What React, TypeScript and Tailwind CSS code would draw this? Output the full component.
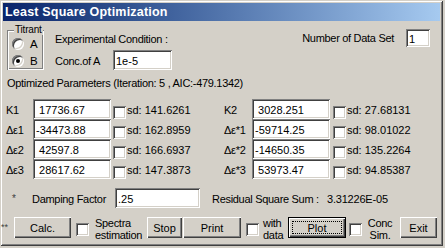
import React from "react";

const sunken =
  "bg-white shadow-[inset_1px_1px_0_#808080,inset_-1px_-1px_0_#ffffff,inset_2px_2px_0_#404040,inset_-2px_-2px_0_#d4d0c8]";
const raised =
  "bg-[#d4d0c8] shadow-[inset_1px_1px_0_#ffffff,inset_-1px_-1px_0_#404040,inset_-2px_-2px_0_#808080]";

function Field({ value, w, h = 20, cls = "" }: { value: string; w: string; h?: number; cls?: string }) {
  return (
    <div
      className={`${sunken} ${w} ${h === 20 ? "h-[20px]" : "h-[18px]"} shrink-0 flex items-center pl-[3px] pt-[2px] whitespace-pre ${cls}`}
    >
      {value}
    </div>
  );
}

function Check({ cls = "" }: { cls?: string }) {
  return <div className={`${sunken} w-[13px] h-[13px] shrink-0 ${cls}`} />;
}

function Btn({ label, w, cls = "" }: { label: string; w: string; cls?: string }) {
  return (
    <div className={`${raised} ${w} h-[21px] shrink-0 flex items-center justify-center pt-[1px] ${cls}`}>
      {label}
    </div>
  );
}

function Radio({ checked }: { checked?: boolean }) {
  return (
    <div className="w-[12px] h-[12px] rounded-full bg-white shrink-0 shadow-[inset_1px_1px_0_#808080,inset_-1px_-1px_0_#ffffff,inset_2px_2px_0_#404040,inset_-2px_-2px_0_#d4d0c8] flex items-center justify-center">
      {checked && <div className="w-[4px] h-[4px] rounded-full bg-black" />}
    </div>
  );
}

function ParamRow({ label, value, sd, lw, cg }: { label: string; value: string; sd: string; lw: string; cg: string }) {
  return (
    <div className="flex items-start h-[20px]">
      <div className={`${lw} h-[20px] flex items-center pt-[3px] shrink-0 tracking-[-0.3px]`}>{label}</div>
      <Field value={value} w="w-[78px]" />
      <Check cls={`${cg} mt-[7px]`} />
      <div className="ml-[1px] h-[20px] flex items-center pt-[3px] whitespace-nowrap">{sd}</div>
    </div>
  );
}

export default function App() {
  return (
    <div className="w-[445px] h-[248px] bg-[#d4d0c8] font-['Liberation_Sans',Arial,sans-serif] text-[11px] text-black leading-none overflow-hidden">
      <div className="w-[443px] h-[246px] p-[3px] flex flex-col shadow-[inset_1px_1px_0_#d4d0c8,inset_-1px_-1px_0_#404040,inset_2px_2px_0_#ffffff,inset_-2px_-2px_0_#808080]">
        {/* title bar */}
        <div className="h-[18px] shrink-0 bg-linear-to-r from-[#0a246a] to-[#a6caf0] flex items-center pl-[2px]">
          <span className="text-white font-bold text-[12.5px] tracking-[0.2px]">Least Square Optimization</span>
        </div>

        {/* row 1 */}
        <div className="h-[51px] shrink-0 flex items-start">
          <div className="relative ml-[4px] mt-[9px] w-[37px] h-[40px] shrink-0 shadow-[inset_1px_1px_0_#808080,inset_-1px_-1px_0_#ffffff,inset_2px_2px_0_#ffffff,inset_-2px_-2px_0_#808080] flex flex-col pt-[8px] pl-[5px] gap-[5px]">
            <span className="absolute left-[7px] top-[-5px] px-[1px] bg-[#d4d0c8] text-[10px] leading-[10px] tracking-[-0.2px]">Titrant</span>
            <div className="flex items-center h-[12px]">
              <Radio />
              <span className="ml-[6px] pt-[1px] text-[11.5px]">A</span>
            </div>
            <div className="flex items-center h-[12px]">
              <Radio checked />
              <span className="ml-[6px] pt-[1px] text-[11.5px]">B</span>
            </div>
          </div>
          <div className="ml-[11px] flex flex-col">
            <div className="mt-[11px] h-[14px] flex items-center tracking-[-0.3px]">Experimental Condition :</div>
            <div className="mt-[4px] h-[20px] flex items-center">
              <div className="w-[58px] h-[20px] flex items-center pt-[2px] tracking-[-0.3px]">Conc.of A</div>
              <Field value="1e-5" w="w-[59px]" />
            </div>
          </div>
          <div className="ml-auto mr-[10px] mt-[8px] h-[18px] flex items-center">
            <span className="tracking-[-0.3px] pt-[1px]">Number of Data Set</span>
            <Field value="1" w="w-[24px]" h={18} cls="ml-[12px]" />
          </div>
        </div>

        {/* row 2 */}
        <div className="mt-[4px] h-[14px] ml-[4px] flex items-center tracking-[-0.3px] shrink-0">
          Optimized Parameters (Iteration: 5 , AIC:-479.1342)
        </div>

        {/* params */}
        <div className="mt-[9px] ml-[3px] flex shrink-0">
          <div className="w-[218px] shrink-0 flex flex-col">
            <ParamRow label="K1" value=" 17736.67" sd="sd: 141.6261" lw="w-[27px]" cg="ml-[2px]" />
            <ParamRow label="Δε1" value="-34473.88" sd="sd: 162.8959" lw="w-[27px]" cg="ml-[2px]" />
            <ParamRow label="Δε2" value=" 42597.8" sd="sd: 166.6937" lw="w-[27px]" cg="ml-[2px]" />
            <ParamRow label="Δε3" value=" 28617.62" sd="sd: 147.3873" lw="w-[27px]" cg="ml-[2px]" />
          </div>
          <div className="flex flex-col">
            <ParamRow label="K2" value=" 3028.251" sd="sd: 27.68131" lw="w-[28px]" cg="ml-[3px]" />
            <ParamRow label="Δε*1" value="-59714.25" sd="sd: 98.01022" lw="w-[28px]" cg="ml-[3px]" />
            <ParamRow label="Δε*2" value="-14650.35" sd="sd: 135.2264" lw="w-[28px]" cg="ml-[3px]" />
            <ParamRow label="Δε*3" value=" 53973.47" sd="sd: 94.85387" lw="w-[28px]" cg="ml-[3px]" />
          </div>
        </div>

        {/* damping */}
        <div className="mt-[9px] h-[20px] flex items-center shrink-0">
          <span className="ml-[9px] w-[20px] text-[10px] text-[#404040] pt-[2px]">*</span>
          <span className="w-[83px] tracking-[-0.3px] pt-[2px]">Damping Factor</span>
          <Field value=".25" w="w-[85px]" />
          <span className="ml-[12px] w-[115px] tracking-[-0.3px] pt-[2px]">Residual Square Sum :</span>
          <span className="pt-[2px] tracking-[-0.2px]">3.31226E-05</span>
        </div>

        {/* buttons */}
        <div className="mt-[9px] h-[21px] flex items-start shrink-0">
          <span className="-ml-[2px] w-[13px] text-[9px] text-[#404040] self-center">**</span>
          <Btn label="Calc." w="w-[57px]" />
          <Check cls="ml-[5px] mt-[6px]" />
          <div className="ml-[6px] w-[52px] flex flex-col leading-[12px] tracking-[-0.3px]">
            <span>Spectra</span>
            <span>estimation</span>
          </div>
          <Btn label="Stop" w="w-[35px]" />
          <Btn label="Print" w="w-[58px]" cls="ml-[1px]" />
          <Check cls="ml-[5px] mt-[6px]" />
          <div className="ml-[4px] w-[25px] flex flex-col leading-[12px] tracking-[-0.3px]">
            <span>with</span>
            <span>data</span>
          </div>
          <div className="w-[58px] h-[21px] shrink-0 border border-black">
            <div className={`${raised} w-full h-full p-[3px] flex`}>
              <div className="flex-1 border border-dotted border-black flex items-center justify-center pt-[1px]">Plot</div>
            </div>
          </div>
          <Check cls="ml-[3px] mt-[6px]" />
          <div className="ml-[3px] w-[30px] flex flex-col items-center leading-[12px] tracking-[-0.3px]">
            <span>Conc</span>
            <span>Sim.</span>
          </div>
          <Btn label="Exit" w="w-[37px]" cls="ml-[5px]" />
        </div>
      </div>
    </div>
  );
}
